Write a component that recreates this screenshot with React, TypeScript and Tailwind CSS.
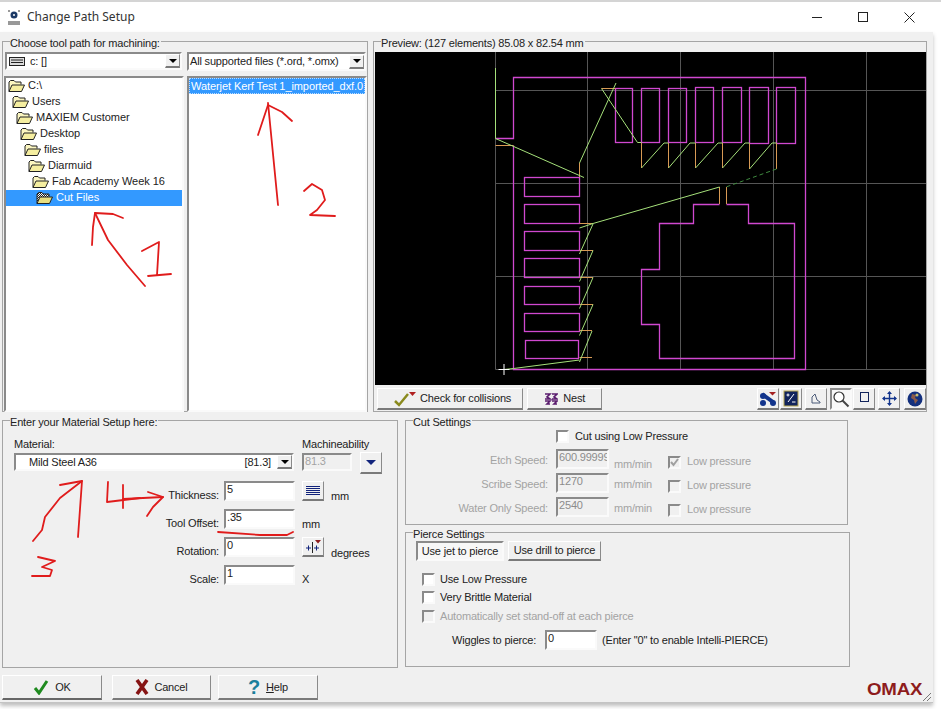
import React from "react";

const raised = "border border-t-white border-l-white border-r-[#8a8a8a] border-b-[#7a7a7a] border-b-2 bg-[#f0f0f0]";
const sunken = "border-2 border-t-[#8a8a8a] border-l-[#8a8a8a] border-r-[#fafafa] border-b-[#fafafa]";
const muted = "text-[#a3a3a3]";

function Arrow() {
  return (
    <span className={`flex w-[15px] h-[14px] items-center justify-center ${raised}`}>
      <span className="block w-0 h-0 border-x-[4px] border-t-[4px] border-x-transparent border-t-black" />
    </span>
  );
}

function Group({ title, className, children }: { title: string; className: string; children?: React.ReactNode }) {
  return (
    <div className={`relative border border-[#a5a5a5] shrink-0 ${className}`}>
      <span className="absolute left-[7px] -top-[6px] bg-[#f0f0f0] pr-px leading-[14px] text-[#222]">{title}</span>
      {children}
    </div>
  );
}

function Input({ value, className, disabled }: { value: string; className: string; disabled?: boolean }) {
  return (
    <div className={`${sunken} shrink-0 pl-px leading-[13px] overflow-hidden ${disabled ? `bg-[#f0f0f0] ${muted}` : "bg-white text-[#222]"} ${className}`}>
      {value}
    </div>
  );
}

function Check({ checked, disabled, className }: { checked?: boolean; disabled?: boolean; className?: string }) {
  return (
    <span className={`block w-[13px] h-[13px] shrink-0 ${sunken} ${disabled ? "bg-[#f0f0f0]" : "bg-white"} ${className ?? ""}`}>
      {checked && (
        <svg viewBox="0 0 9 9" className="w-[9px] h-[9px]">
          <path d="M1 4l2.5 3L8 1" fill="none" stroke="#a0a0a0" strokeWidth="2" />
        </svg>
      )}
    </span>
  );
}

function Folder({ selected }: { selected?: boolean }) {
  return (
    <svg viewBox="0 0 17 14" className="w-[17px] h-[14px] shrink-0">
      <defs>
        <pattern id="dither" width="2" height="2" patternUnits="userSpaceOnUse">
          <rect width="2" height="2" fill="#fff" />
          <rect width="1" height="1" fill="#222" />
          <rect x="1" y="1" width="1" height="1" fill="#222" />
        </pattern>
      </defs>
      <path d="M1 12.5V3l1.5-1.5H6L7.5 3H13v2.5" fill={selected ? "url(#dither)" : "#fbf6c0"} stroke="#222" />
      <path d="M1 12.5L4 6h12.5l-3 6.5z" fill={selected ? "#e8df80" : "#f5eea0"} stroke="#222" />
    </svg>
  );
}

const treeRows = ["C:\\", "Users", "MAXIEM Customer", "Desktop", "files", "Diarmuid", "Fab Academy Week 16", "Cut Files"];
const treeIndent = ["pl-[2px]", "pl-[6px]", "pl-[10px]", "pl-[14px]", "pl-[18px]", "pl-[22px]", "pl-[26px]", "pl-[30px]"];

const topRects = [
  [615.5, 88.5, 17, 54], [641.5, 88.5, 18, 54], [668.5, 88.5, 18, 54], [695.5, 87.5, 18, 55],
  [722.5, 87.5, 19, 55], [749.5, 87.5, 19, 56], [776.5, 87.5, 19, 56],
];
const sideRects = [
  [524.5, 177.5, 55, 19], [524.5, 204.5, 55, 19], [524.5, 231.5, 55, 19], [524.5, 258.5, 55, 19],
  [524.5, 286.5, 55, 18], [524.5, 313.5, 55, 18], [525.5, 340.5, 53, 18],
];
const orange = [
  "M495.5 145.5H513.5", "M579.5 177V163", "M601.5 88.5H615.5",
  "M641.5 143V168", "M668.5 143V168", "M695.5 143V168", "M722.5 143V168", "M749.5 143V169", "M776.5 143V169",
  "M719.5 187V204", "M726.5 187V204",
  "M579.5 223.5H593", "M579.5 250.5H593", "M579.5 277.5H593", "M579.5 304.5H593", "M579.5 330.5H592", "M579.5 357.5H592",
];
const green = [
  "M495.5 68V138.5L584 177.5", "M579.5 163L616 83", "M601.5 88.5L637.5 142.5H641.5",
  "M641.5 168L664 143H668.5", "M668.5 168L690 143H695.5", "M695.5 168L718 143H722.5", "M722.5 168L745 143H749.5", "M749.5 169L772 143H776.5",
  "M719.5 187L593 223.5L579.5 228", "M593 224L579.5 254", "M593 250.5L579.5 281.5", "M593 277.5L579.5 308.5", "M593 304.5L579.5 335.5", "M592 331L579.5 362",
  "M579.5 360L513.5 368.5L504 369.5",
];

function Preview() {
  return (
    <svg viewBox="375 52 551 333" className="w-[551px] h-[333px] block">
      <rect x="375" y="52" width="551" height="333" fill="#000" />
      <path d="M495.5 52V369.5M587.5 52V369.5M680.5 52V369.5M773.5 52V369.5M866.5 52V369.5M495.5 90.5H926M495.5 183.5H926M495.5 276.5H926M495.5 369.5H926" stroke="#555" fill="none" />
      <g fill="none" stroke="#d048d0" strokeWidth="1.3">
        <path d="M495.5 138.5H513.5V77.5H805.5V369.5H513.5V145.5" />
        {topRects.map((r, i) => <rect key={i} x={r[0]} y={r[1]} width={r[2]} height={r[3]} />)}
        {sideRects.map((r, i) => <rect key={i} x={r[0]} y={r[1]} width={r[2]} height={r[3]} />)}
        <path d="M719.5 204.5H693.5V223.5H659.5V269.5H641.5V324.5H659.5V358.5H794.5V223.5H748.5V204.5H726.5" />
      </g>
      <g fill="none" stroke="#d89a55">
        {orange.map((d, i) => <path key={i} d={d} />)}
      </g>
      <g fill="none" stroke="#a5e07a">
        {green.map((d, i) => <path key={i} d={d} />)}
      </g>
      <path d="M776.5 169L726 187" stroke="#3f8a3f" strokeDasharray="4 3" fill="none" />
      <path d="M504 364V375M498.5 369.5H509.5" stroke="#fff" fill="none" />
    </svg>
  );
}

function ToolButton({ pressed, children }: { pressed?: boolean; children: React.ReactNode }) {
  return (
    <div className={`flex w-[22px] h-[22px] items-center justify-center shrink-0 ${pressed ? `${sunken} bg-[#f8f8f8]` : raised}`}>
      {children}
    </div>
  );
}

function Annotations() {
  const lines = [
    // 1
    "M145 286L127 265L108 240L95 213", "M92 245L93 227L95 213L113 214L123 218", "M142 251L159 242L157 275", "M148 276L171 274",
    // 2
    "M268 103L278 205", "M258 135L263 120L268 105L282 112L292 121", "M304 191L312 184L322 190L325 200L317 210L310 215L335 216",
    // 3
    "M33 541L42 530L45 517L60 498L82 481L78 537", "M60 485L82 481", "M38 557L55 561L42 567L52 570L50 576L32 576",
    // 4
    "M108 482L107 502L140 498", "M123 485L123 508", "M123 499L163 497", "M148 492L163 497L153 507L147 516",
    // underline
    "M218 532L260 535L287 535L293 532",
  ];
  return (
    <svg viewBox="0 0 941 709" className="absolute inset-0 w-[941px] h-[709px] pointer-events-none">
      <g fill="none" stroke="#e01c1c" strokeWidth="1.8" strokeLinecap="round" strokeLinejoin="round">
        {lines.map((d, i) => <path key={i} d={d} />)}
      </g>
    </svg>
  );
}

function MaterialRow({ label, value, className, children }: { label: string; value: string; className: string; children?: React.ReactNode }) {
  return (
    <div className={`flex h-[20px] ${className}`}>
      <div className="w-[205px] text-right pt-[7px] leading-[14px]">{label}</div>
      <Input value={value} className="w-[71px] h-[20px] ml-[5px]" />
      {children}
    </div>
  );
}

function SpeedRow({ label, value, unitClass, className, checked }: { label: string; value: string; unitClass: string; className?: string; checked?: boolean }) {
  return (
    <div className={`flex h-[20px] leading-[14px] ${muted} ${className ?? ""}`}>
      <div className="w-[142px] text-right pt-[4px]">{label}</div>
      <Input value={value} disabled className="w-[53px] h-[20px] ml-[8px] !text-[#8c8c8c]" />
      <div className={`w-[54px] ml-[5px] ${unitClass}`}>mm/min</div>
      <Check checked={checked} disabled className="mt-[7px]" />
      <div className="ml-[6px] pt-[5px]">Low pressure</div>
    </div>
  );
}

export default function App() {
  return (
    <div className="relative w-[941px] h-[709px] overflow-hidden bg-white text-[11px] tracking-[-0.18px] whitespace-nowrap text-[#222]" style={{ fontFamily: '"Liberation Sans", Arial, sans-serif' }}>
      {/* title bar */}
      <div className="flex items-center h-[32px] border-t-2 border-[#d4d4d4] bg-white">
        <svg viewBox="0 0 14 15" className="w-[14px] h-[15px] ml-[7px]">
          <circle cx="7" cy="5" r="3.5" fill="#1d3a66" />
          <circle cx="7" cy="5" r="1" fill="#fff" />
          <path d="M1 1h2M11 1h2M1 12h12M1 14h12" stroke="#333" fill="none" />
        </svg>
        <span className="ml-[6px] text-[12px] tracking-normal text-[#333]" style={{ fontFamily: '"Noto Sans", sans-serif' }}>Change Path Setup</span>
        <div className="flex ml-auto mr-[9px]">
          <div className="flex w-[46px] h-[30px] items-center justify-center">
            <span className="block w-[10px] h-px bg-[#222]" />
          </div>
          <div className="flex w-[46px] h-[30px] items-center justify-center">
            <span className="block w-[10px] h-[10px] border border-[#222]" />
          </div>
          <div className="flex w-[46px] h-[30px] items-center justify-center">
            <svg viewBox="0 0 11 11" className="w-[11px] h-[11px]">
              <path d="M.5.5l10 10M10.5.5l-10 10" stroke="#222" fill="none" />
            </svg>
          </div>
        </div>
      </div>

      {/* dialog body */}
      <div className="w-[933px] h-[671px] pt-[9px] pl-[2px] bg-[#f0f0f0] border-b border-[#c4c4c4] shadow-[0_3px_4px_rgba(0,0,0,0.25)]">
        <div className="flex gap-[5px]">
          <Group title="Choose tool path for machining:" className="w-[366px] h-[371px] pt-[10px] pl-px">
            <div className="flex ml-px">
              <div className={`flex w-[177px] h-[18px] items-center bg-white ${sunken}`}>
                <svg viewBox="0 0 16 9" className="w-[16px] h-[9px] ml-[2px]">
                  <rect x=".5" y=".5" width="15" height="8" fill="#ddd" stroke="#222" />
                  <path d="M2 3h12M2 5.5h12" stroke="#222" />
                </svg>
                <span className="ml-[5px]">c: []</span>
                <span className="ml-auto"><Arrow /></span>
              </div>
              <div className={`flex w-[179px] h-[19px] ml-[5px] items-center bg-white ${sunken}`}>
                <span className="ml-[1px]">All supported files (*.ord, *.omx)</span>
                <span className="ml-auto"><Arrow /></span>
              </div>
            </div>
            <div className="flex gap-[3px] mt-[5px] tracking-[-0.03px]">
              <div className={`w-[180px] h-[336px] bg-white ${sunken}`}>
                {treeRows.map((name, i) => (
                  <div key={name} className={`flex h-[16px] items-center ${treeIndent[i]} ${i === 7 ? "bg-[#3399ff] text-white" : ""}`}>
                    <Folder selected={i === 7} />
                    <span className="ml-[3px] pb-[2px]">{name}</span>
                  </div>
                ))}
              </div>
              <div className={`w-[180px] h-[336px] bg-white ${sunken}`}>
                <div className="h-[16px] pl-[1px] bg-[#3399ff] text-white leading-[14px] tracking-[-0.08px] overflow-hidden border border-dotted border-[#bcdcff]">
                  Waterjet Kerf Test 1_imported_dxf.0
                </div>
              </div>
            </div>
          </Group>

          <Group title="Preview: (127 elements) 85.08 x 82.54 mm" className="w-[554px] h-[371px] pt-[10px] pl-px">
            <Preview />
            <div className="flex items-start mt-[3px] pl-[2px]">
              <div className={`flex w-[147px] h-[22px] items-center ${raised}`}>
                <svg viewBox="0 0 24 16" className="w-[24px] h-[16px] ml-[15px]">
                  <path d="M2 10l4 4L15 3" fill="none" stroke="#8a8a1e" strokeWidth="2.5" />
                  <path d="M16 1h7l-3.5 4z" fill="#b02020" />
                </svg>
                <span className="ml-[3px]">Check for collisions</span>
              </div>
              <div className={`flex w-[75px] h-[22px] ml-[4px] items-center ${raised}`}>
                <svg viewBox="0 0 14 12" className="w-[14px] h-[12px] ml-[16px]">
                  <path d="M1 1h5L3 4l3 2H1M8 1h5l-3 3 3 2H8M1 8h5L3 11h3M8 8h5l-3 3h3" fill="none" stroke="#5a1c6e" strokeWidth="1.6" />
                </svg>
                <span className="ml-[5px]">Nest</span>
              </div>
              <div className="flex ml-[155px] gap-px">
                <ToolButton>
                  <svg viewBox="0 0 18 16" className="w-[18px] h-[16px]">
                    <path d="M10 1h7l-3.5 3.5z" fill="#a32020" />
                    <path d="M3 3l11 8" stroke="#12348c" strokeWidth="4" />
                    <circle cx="4" cy="5" r="3" fill="#12348c" />
                    <circle cx="4" cy="12" r="3" fill="#12348c" />
                    <circle cx="14" cy="12" r="3" fill="#12348c" />
                  </svg>
                </ToolButton>
                <ToolButton>
                  <svg viewBox="0 0 16 17" className="w-[16px] h-[17px]">
                    <rect x="1" y="1" width="14" height="15" fill="#12245c" stroke="#b8a850" />
                    <path d="M5 12l6-8M3.5 5h3M5 3.5v3M9 12h3.5" stroke="#fff" fill="none" />
                  </svg>
                </ToolButton>
                <div className="w-px" />
                <ToolButton>
                  <svg viewBox="0 0 14 14" className="w-[14px] h-[14px]">
                    <path d="M3 11V5l3-3 2 6 3 2v1z" fill="none" stroke="#4a5a78" />
                  </svg>
                </ToolButton>
                <div className="w-px" />
                <ToolButton pressed>
                  <svg viewBox="0 0 18 18" className="w-[18px] h-[18px]">
                    <circle cx="7" cy="7" r="5" fill="#fff" stroke="#333" strokeWidth="1.2" />
                    <path d="M10.5 10.5l6 6" stroke="#444" strokeWidth="2" />
                  </svg>
                </ToolButton>
                <ToolButton>
                  <span className="block w-[9px] h-[10px] -mt-[3px] border border-[#12245c]" />
                </ToolButton>
                <div className="w-px" />
                <ToolButton>
                  <svg viewBox="0 0 15 15" className="w-[15px] h-[15px]">
                    <path d="M7.5 1v13M1 7.5h13" stroke="#12348c" strokeWidth="1.4" />
                    <path d="M7.5 0l2.5 3h-5zM7.5 15l2.5-3h-5zM0 7.5L3 5v5zM15 7.5L12 5v5z" fill="#12348c" />
                  </svg>
                </ToolButton>
                <div className="w-[2px]" />
                <ToolButton>
                  <svg viewBox="0 0 16 16" className="w-[16px] h-[16px]">
                    <circle cx="8" cy="8" r="7.5" fill="#13307e" />
                    <path d="M5 3l4 1-1 3 3 2-3 4-1-4-3-2z" fill="#8a5a4a" />
                    <circle cx="10" cy="4" r="1.5" fill="#c9c070" />
                  </svg>
                </ToolButton>
              </div>
            </div>
          </Group>
        </div>

        <div className="flex mt-[8px]">
          <Group title="Enter your Material Setup here:" className="w-[396px] h-[248px] pl-[11px]">
            <div className="flex pt-[16px] leading-[14px]">
              <div className="w-[288px]">Material:</div>
              <div>Machineability</div>
            </div>
            <div className="flex h-[18px] mt-[2px] items-start">
              <div className={`flex w-[280px] h-[18px] items-center bg-white pl-[13px] ${sunken}`}>
                <span>Mild Steel A36</span>
                <span className="ml-auto mr-[6px]">[81.3]</span>
                <Arrow />
              </div>
              <Input value="81.3" disabled className="w-[50px] h-[18px] ml-[8px]" />
              <div className={`flex w-[22px] h-[22px] ml-[8px] -mt-px items-center justify-center ${raised}`}>
                <span className="block w-0 h-0 border-x-[5px] border-t-[5px] border-x-transparent border-t-[#12247c]" />
              </div>
            </div>
            <MaterialRow label="Thickness:" value="5" className="mt-[10px]">
              <div className={`flex flex-col gap-px w-[22px] h-[20px] ml-[7px] items-center justify-center ${raised}`}>
                <span className="block w-[14px] h-px bg-[#12247c]" />
                <span className="block w-[14px] h-px bg-[#12247c]" />
                <span className="block w-[14px] h-px bg-[#12247c]" />
                <span className="block w-[14px] h-px bg-[#12247c]" />
                <span className="block w-[14px] h-px bg-[#12247c]" />
              </div>
              <div className="ml-[7px] pt-[8px] leading-[14px]">mm</div>
            </MaterialRow>
            <MaterialRow label="Tool Offset:" value=".35" className="mt-[8px]">
              <div className="ml-[7px] pt-[8px] leading-[14px]">mm</div>
            </MaterialRow>
            <MaterialRow label="Rotation:" value="0" className="mt-[8px]">
              <div className={`flex w-[22px] h-[20px] ml-[7px] items-center justify-center ${raised}`}>
                <svg viewBox="0 0 16 14" className="w-[16px] h-[14px]">
                  <path d="M7.5 2v11" stroke="#222" />
                  <path d="M1 8h5M3.5 5.5v5M9 8h5M11.5 5.5v5" stroke="#12247c" />
                  <path d="M10 0h6l-3 3.5z" fill="#8e1c1c" />
                </svg>
              </div>
              <div className="ml-[7px] pt-[9px] leading-[14px]">degrees</div>
            </MaterialRow>
            <MaterialRow label="Scale:" value="1" className="mt-[8px]">
              <div className="ml-[7px] pt-[7px] leading-[14px]">X</div>
            </MaterialRow>
          </Group>

          <div className="ml-[7px]">
            <Group title="Cut Settings" className="w-[443px] h-[105px]">
              <div className="flex items-center h-[13px] mt-[9px] ml-[150px]">
                <Check />
                <span className="ml-[6px]">Cut using Low Pressure</span>
              </div>
              <SpeedRow label="Etch Speed:" value="600.99999" unitClass="pt-[8px]" checked className="mt-[6px]" />
              <SpeedRow label="Scribe Speed:" value="1270" unitClass="pt-[4px]" className="mt-[4px]" />
              <SpeedRow label="Water Only Speed:" value="2540" unitClass="pt-[4px]" className="mt-[4px]" />
            </Group>
            <Group title="Pierce Settings" className="w-[445px] h-[135px] mt-[7px]">
              <div className="flex mt-[8px] ml-[10px]">
                <div className={`flex w-[88px] h-[20px] items-center justify-center bg-[#f7f7f7] ${sunken}`}>Use jet to pierce</div>
                <div className={`flex w-[93px] h-[20px] ml-[4px] items-center justify-center ${raised}`}>Use drill to pierce</div>
              </div>
              <div className="flex items-center h-[13px] mt-[12px] ml-[16px]">
                <Check />
                <span className="ml-[5px]">Use Low Pressure</span>
              </div>
              <div className="flex items-center h-[13px] mt-[5px] ml-[16px]">
                <Check />
                <span className="ml-[5px]">Very Brittle Material</span>
              </div>
              <div className={`flex items-center h-[13px] mt-[6px] ml-[16px] ${muted}`}>
                <Check disabled />
                <span className="ml-[5px]">Automatically set stand-off at each pierce</span>
              </div>
              <div className="flex items-center h-[20px] mt-[7px] ml-[46px]">
                <span className="w-[93px]">Wiggles to pierce:</span>
                <Input value="0" className="w-[52px] h-[20px]" />
                <span className="ml-[5px]">(Enter "0" to enable Intelli-PIERCE)</span>
              </div>
            </Group>
          </div>
        </div>

        <div className="flex items-start mt-[7px] pr-[2px]">
          <div className={`flex w-[100px] h-[25px] items-center justify-center gap-[6px] border-b-[#666] ${raised}`}>
            <svg viewBox="0 0 16 16" className="w-[16px] h-[16px]">
              <path d="M2 9l4 5L14 2" fill="none" stroke="#1f8a1f" strokeWidth="3" />
            </svg>
            <span>OK</span>
          </div>
          <div className={`flex w-[99px] h-[25px] ml-[10px] items-center justify-center gap-[5px] ${raised}`}>
            <svg viewBox="0 0 14 16" className="w-[14px] h-[16px]">
              <path d="M2 1l10 14M12 1L2 15" stroke="#861414" strokeWidth="3.6" fill="none" />
            </svg>
            <span>Cancel</span>
          </div>
          <div className={`flex w-[100px] h-[25px] ml-[7px] items-center justify-center gap-[6px] ${raised}`}>
            <span className="text-[20px] font-bold leading-[20px] text-[#1a7f9c]">?</span>
            <span><span className="underline">H</span>elp</span>
          </div>
          <div className="ml-auto mr-[9px] mt-[6px] text-[17px] leading-[17px] font-bold text-[#8e1c1c] scale-x-110 origin-right">OMAX</div>
        </div>
      </div>

      <svg viewBox="0 0 10 10" className="absolute left-[922px] top-[692px] w-[10px] h-[10px]">
        <path d="M1 9l8-8M5 9l4-4" stroke="#777" fill="none" />
      </svg>
      <Annotations />
    </div>
  );
}
